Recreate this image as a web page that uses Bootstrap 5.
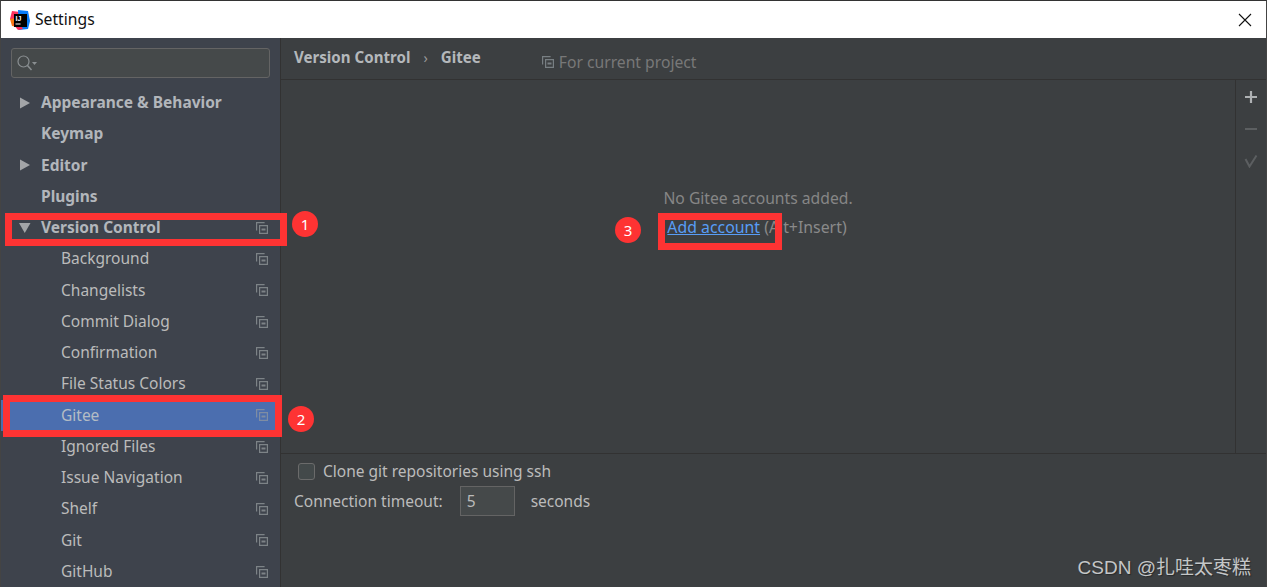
<!DOCTYPE html>
<html lang="en">
<head>
<meta charset="utf-8">
<title>Settings</title>
<link rel="stylesheet" href="https://cdn.jsdelivr.net/npm/bootstrap@5.3.0/dist/css/bootstrap.min.css">
<style>
html,body{height:587px;overflow:hidden;background:#3c3f41}
body{font-family:"Noto Sans","Open Sans","Noto Sans CJK SC",sans-serif;font-size:15.5px;color:#bbb}
.win{position:relative;width:1267px;height:587px;overflow:hidden;border-top:1px solid #333;border-left:1px solid #444;border-right:1px solid #444}
.titlebar{height:37px;background:#fff;color:#111;font-family:"Noto Sans",sans-serif;font-size:15.7px}
.logo{margin-left:9px;margin-right:5px}
.closex{margin-right:14px}
.sidebar{width:280px;background:#3e434c;border-right:1px solid #323232;height:549px;overflow:hidden}
.searchbox{margin:10px 10px 9.2px 10px;height:30px;width:259px;background:#45494a;border:1px solid #646464;border-radius:3px;padding-left:5px}
.treerow{height:31.25px;padding-left:17px;padding-right:12px;white-space:nowrap}
.treerow .twist{width:23px;flex:none}
.treerow.child{padding-left:60px}
.treerow.on{background:#4b6eaf;color:#b4bcc4}
.treetext{flex:1;line-height:1}
.boldname{font-weight:700;color:#b2b6bb}
.mainpane{flex:1;min-width:0;background:#3c3f41;height:549px}
.crumbs{height:42px;border-bottom:1px solid #323232;padding-left:13px;position:relative}
.crumbtext{font-weight:700;color:#b4b8bb;font-size:15.1px;margin-top:-2px}
.crumbsep{margin:-2px 13px 0 13px;color:#999;font-size:14px}
.scope{margin-left:61px;color:#787878;margin-top:8px;font-size:15.7px;column-gap:5px}
.midarea{height:374px}
.centerpane{flex:1;min-width:0;padding-top:103px}
.emptyline{color:#868686;line-height:30px;height:30px;font-size:15.7px}
.emptyline.second{font-size:15.85px;margin-top:-.5px;padding-right:2px}
.addlink{color:#589df6;text-decoration:underline}
.hintgrey{color:#8a8a8a}
.toolstrip{width:31px;border-left:1px solid #323232;padding-top:1px;flex:none}
.toolbtn{height:32px}
.optionspane{border-top:1px solid #323232;height:134px;padding:7px 13px}
.chk{width:17px;height:17px;border:1px solid #6b6b6b;border-radius:3px;background:#43494a;margin:0 8px 0 4px}
.optrow1{height:20px}
.optrow2{height:40px;margin-top:0}
.numfield{width:55px;height:30px;background:#45494a;border:1px solid #646464;color:#bbb;padding-left:6px;margin:0 16px 0 17px}
.redbox{position:absolute;border:7px solid #fe3333;pointer-events:none}
.rb1{left:4px;top:212px;width:282px;height:33px}
.rb2{left:2px;top:394px;width:279px;height:42px}
.rb3{left:657px;top:212px;width:124px;height:37px}
.dotnum{position:absolute;width:26px;height:26px;border-radius:50%;background:#fe3333;color:#fff;font-size:15px;line-height:1}
.d1{left:291px;top:210px}
.d2{left:287px;top:405px}
.d3{left:614px;top:216px}
.wmark{position:absolute;right:15px;bottom:10px;color:#c4c6c7;font-family:"Liberation Sans","Noto Sans CJK SC",sans-serif;font-size:19px;line-height:1;text-shadow:1px 1px 1px rgba(0,0,0,.35)}
</style>
</head>
<body>
<svg width="0" height="0" class="d-block position-absolute">
<defs>
<symbol id="cp" viewBox="0 0 12 12"><path d="M.6 8.500V.6h8" fill="none" stroke="currentColor" stroke-width="1.200"/><path d="M3.600 3.600h7.800v7.800H3.600z" fill="none" stroke="currentColor" stroke-width="1.200"/><path d="M5.500 6.500h4v2h-4z" fill="currentColor"/></symbol>
</defs>
</svg>
<div class="win">
  <div class="titlebar d-flex align-items-center">
    <svg class="logo" width="20" height="20" viewBox="0 0 20 20">
      <path d="M0 9 2 1l8 1-2 8-4 4z" fill="#fe315d"/><path d="M0 9l2 7 6 1-2-9z" fill="#f97a12"/>
      <path d="M8 0l10 1 2 10-2 8-9 1z" fill="#087cfa"/><path d="M3 14l5 6 5-1-4-7z" fill="#fe2857"/>
      <rect x="4" y="4" width="13" height="13" fill="#000"/>
      <text x="5.500" y="11" fill="#fff" font-size="7" font-weight="700" font-family="Liberation Sans">IJ</text>
      <rect x="5.500" y="13.500" width="5" height="1" fill="#fff"/>
    </svg>
    <span class="flex-grow-1">Settings</span>
    <svg class="closex" width="14" height="14" viewBox="0 0 14 14"><path d="M1 1l12 12M13 1 1 13" stroke="#111" stroke-width="1.100"/></svg>
  </div>
  <div class="d-flex">
    <div class="sidebar flex-none">
      <div class="searchbox d-flex align-items-center">
        <svg width="22" height="16" viewBox="0 0 22 16"><circle cx="6.500" cy="6.500" r="5.500" fill="none" stroke="#8a8f92" stroke-width="1.200"/><path d="M10.500 10.500l4 4.500" stroke="#8a8f92" stroke-width="1.500"/><path d="M15 7h5l-2.500 3z" fill="#8a8f92"/></svg>
      </div>
      <div class="treerow d-flex align-items-center"><svg class="twist" height="12" viewBox="0 0 23 12"><path d="M2 .5v11l10-5.500z" fill="#a3a5a8"/></svg><span class="treetext boldname">Appearance &amp; Behavior</span></div>
      <div class="treerow d-flex align-items-center"><span class="twist"></span><span class="treetext boldname">Keymap</span></div>
      <div class="treerow d-flex align-items-center"><svg class="twist" height="12" viewBox="0 0 23 12"><path d="M2 .5v11l10-5.500z" fill="#a3a5a8"/></svg><span class="treetext boldname">Editor</span></div>
      <div class="treerow d-flex align-items-center"><span class="twist"></span><span class="treetext boldname">Plugins</span></div>
      <div class="treerow d-flex align-items-center"><svg class="twist" height="12" viewBox="0 0 23 12"><path d="M1 1h11.500l-5.750 10z" fill="#a3a5a8"/></svg><span class="treetext boldname">Version Control</span><svg width="12" height="12" color="#7d8387"><use href="#cp"/></svg></div>
      <div class="treerow child d-flex align-items-center"><span class="treetext">Background</span><svg width="12" height="12" color="#7d8387"><use href="#cp"/></svg></div>
      <div class="treerow child d-flex align-items-center"><span class="treetext">Changelists</span><svg width="12" height="12" color="#7d8387"><use href="#cp"/></svg></div>
      <div class="treerow child d-flex align-items-center"><span class="treetext">Commit Dialog</span><svg width="12" height="12" color="#7d8387"><use href="#cp"/></svg></div>
      <div class="treerow child d-flex align-items-center"><span class="treetext">Confirmation</span><svg width="12" height="12" color="#7d8387"><use href="#cp"/></svg></div>
      <div class="treerow child d-flex align-items-center"><span class="treetext">File Status Colors</span><svg width="12" height="12" color="#7d8387"><use href="#cp"/></svg></div>
      <div class="treerow child on d-flex align-items-center"><span class="treetext">Gitee</span><svg width="12" height="12" color="#7f8da3"><use href="#cp"/></svg></div>
      <div class="treerow child d-flex align-items-center"><span class="treetext">Ignored Files</span><svg width="12" height="12" color="#7d8387"><use href="#cp"/></svg></div>
      <div class="treerow child d-flex align-items-center"><span class="treetext">Issue Navigation</span><svg width="12" height="12" color="#7d8387"><use href="#cp"/></svg></div>
      <div class="treerow child d-flex align-items-center"><span class="treetext">Shelf</span><svg width="12" height="12" color="#7d8387"><use href="#cp"/></svg></div>
      <div class="treerow child d-flex align-items-center"><span class="treetext">Git</span><svg width="12" height="12" color="#7d8387"><use href="#cp"/></svg></div>
      <div class="treerow child d-flex align-items-center"><span class="treetext">GitHub</span><svg width="12" height="12" color="#7d8387"><use href="#cp"/></svg></div>
    </div>
    <div class="mainpane d-flex flex-column">
      <div class="crumbs d-flex align-items-center">
        <span class="crumbtext">Version Control</span><span class="crumbsep">›</span><span class="crumbtext">Gitee</span>
        <span class="scope d-flex align-items-center"><svg width="12" height="12" color="#787f83"><use href="#cp"/></svg>For current project</span>
      </div>
      <div class="midarea d-flex">
        <div class="centerpane text-center">
          <div class="emptyline">No Gitee accounts added.</div>
          <div class="emptyline second"><a class="addlink" href="#">Add account</a> <span class="hintgrey">(Alt+Insert)</span></div>
        </div>
        <div class="toolstrip d-flex flex-column align-items-center">
          <div class="toolbtn d-flex align-items-center justify-content-center"><svg width="14" height="14" viewBox="0 0 14 14"><path d="M7 1v12M1 7h12" stroke="#aeb1b3" stroke-width="2.200"/></svg></div>
          <div class="toolbtn d-flex align-items-center justify-content-center"><svg width="14" height="14" viewBox="0 0 14 14"><path d="M1 7h12" stroke="#5c5f61" stroke-width="2"/></svg></div>
          <div class="toolbtn d-flex align-items-center justify-content-center"><svg width="14" height="14" viewBox="0 0 14 14"><path d="M1.500 5l4 7.500L12.500 1.500" fill="none" stroke="#5c5f61" stroke-width="2"/></svg></div>
        </div>
      </div>
      <div class="optionspane">
        <div class="optrow1 d-flex align-items-center"><span class="chk d-inline-block"></span><span>Clone git repositories using ssh</span></div>
        <div class="optrow2 d-flex align-items-center"><span>Connection timeout:</span><span class="numfield d-flex align-items-center">5</span><span>seconds</span></div>
      </div>
    </div>
  </div>
  <div class="redbox rb1"></div>
  <div class="redbox rb2"></div>
  <div class="redbox rb3"></div>
  <div class="dotnum d1 d-flex align-items-center justify-content-center">1</div>
  <div class="dotnum d2 d-flex align-items-center justify-content-center">2</div>
  <div class="dotnum d3 d-flex align-items-center justify-content-center">3</div>
  <div class="wmark">CSDN @扎哇太枣糕</div>
</div>
</body>
</html>
